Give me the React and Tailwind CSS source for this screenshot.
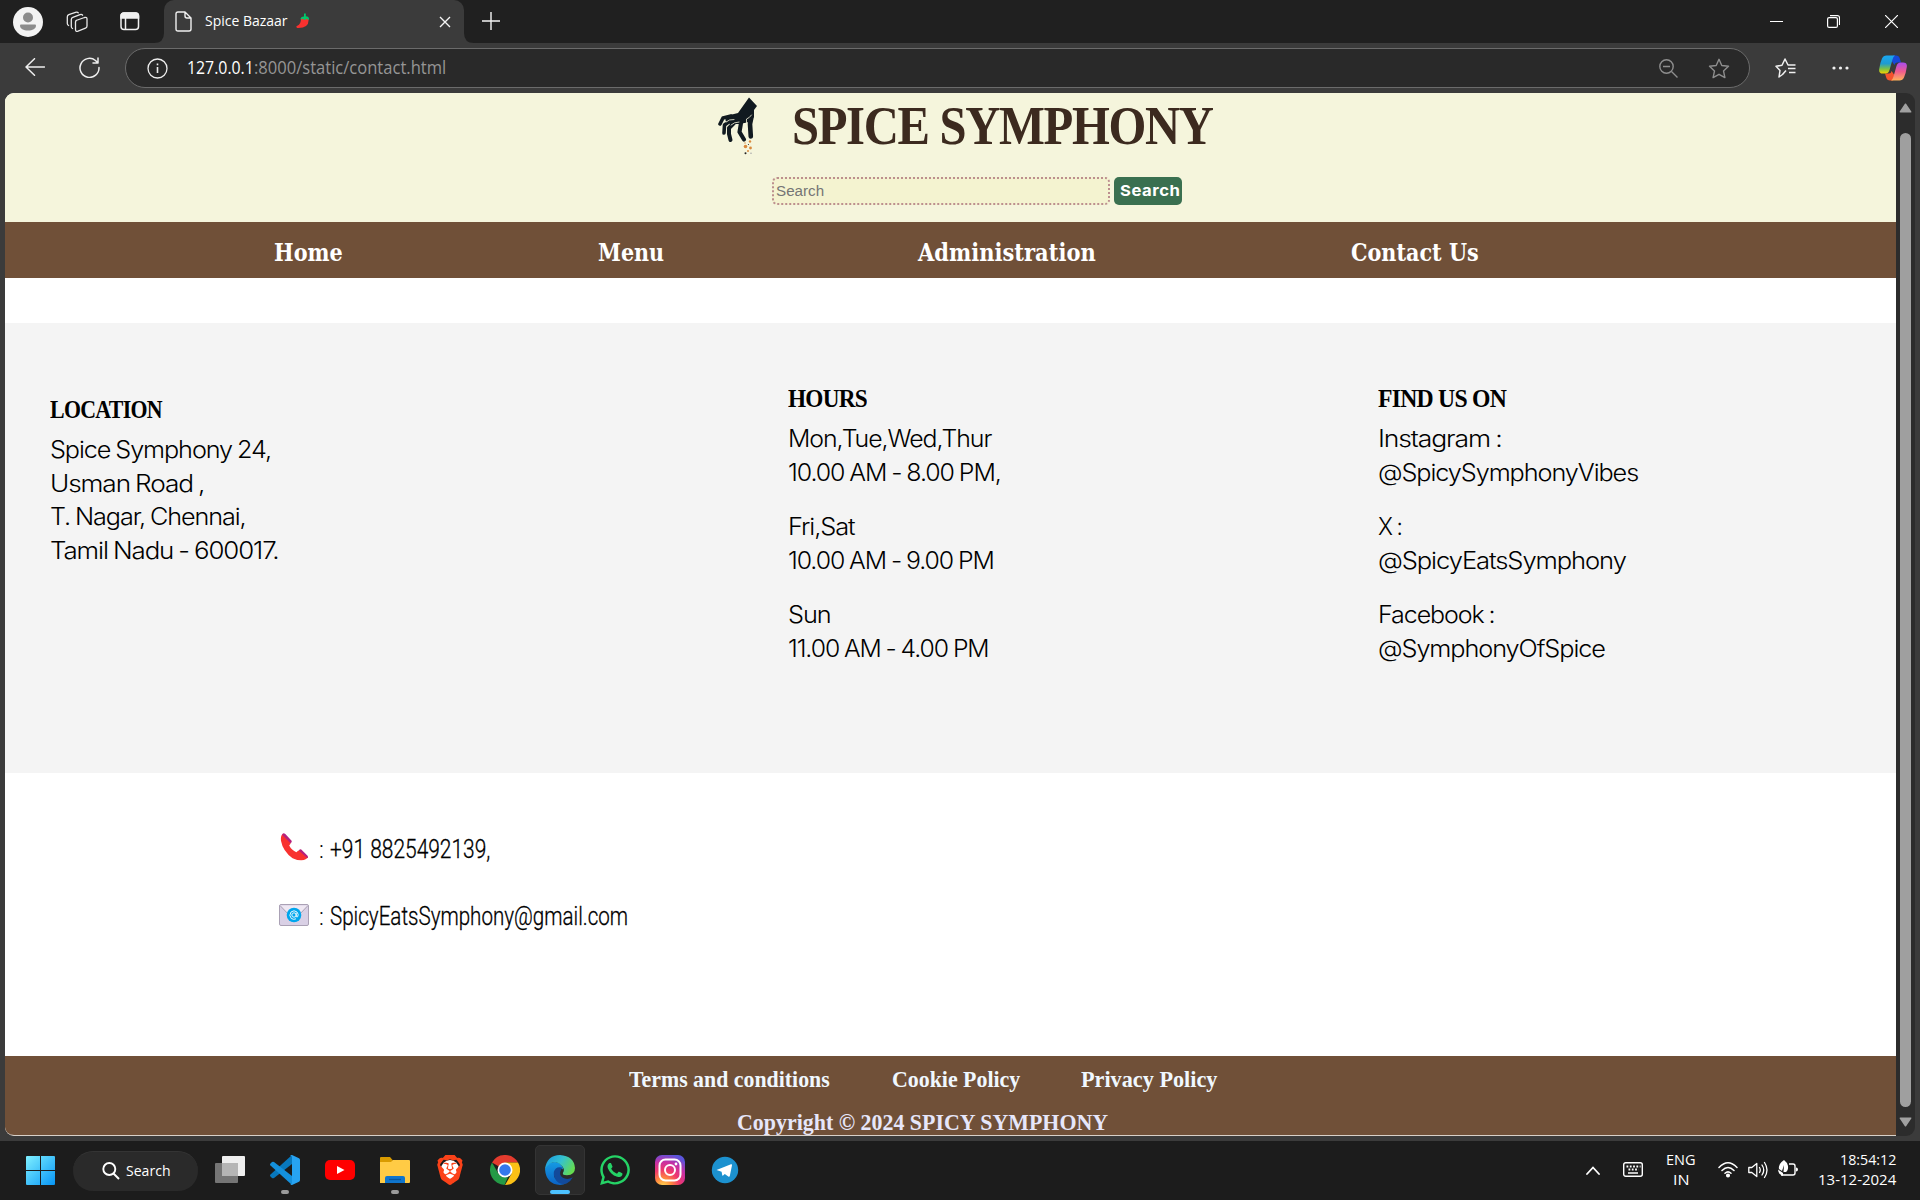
import React, { useLayoutEffect, useRef } from "react";
import { FaWhatsapp } from "react-icons/fa";
import { SiBrave } from "react-icons/si";

// Text set to an exact advance width by condensing or widening the glyphs.
function Fit({ w, className = "", children }) {
  const box = useRef(null);
  const text = useRef(null);
  useLayoutEffect(() => {
    text.current.style.transform = `scaleX(${w / text.current.offsetWidth})`;
    box.current.style.width = `${w}px`;
  }, [w]);
  return (
    <span ref={box} className="block shrink-0">
      <span ref={text} className={`inline-block origin-left whitespace-pre ${className}`}>
        {children}
      </span>
    </span>
  );
}

const UI = "font-['Open_Sans',sans-serif]";

function TabStrip() {
  return (
    <div className="flex h-[43px] items-center bg-[#202020] text-white">
      <svg className="ml-[13px] shrink-0" width="30" height="30" viewBox="0 0 30 30">
        <circle cx="15" cy="15" r="15" fill="#f3f3f3" />
        <circle cx="15" cy="10.5" r="5" fill="#8b8b8b" />
        <path d="M8 17.5h14a1 1 0 0 1 1 1c0 3.200-3.500 5-8 5s-8-1.800-8-5a1 1 0 0 1 1-1Z" fill="#8b8b8b" />
      </svg>
      <svg className="ml-[23px] shrink-0" width="22" height="22" viewBox="0 0 22 22" fill="none" stroke="#e8e8e8" strokeWidth="1.300" strokeLinejoin="round" strokeLinecap="round">
        <path d="M10 9.500 18.500 6.500Q21 5.800 21 8v7q0 1.600-1.500 2.200L12 20.200Q9.500 21 9.500 18.500v-7.500Q9.500 9.800 10.500 9.300Z" />
        <path d="M6.500 17.500Q5.300 17 5.300 15.500V8.500Q5.300 6.900 6.800 6.300L14 3.600Q15.800 3 16.600 4.200" />
        <path d="M2.600 14.500Q1.300 14 1.300 12.500V6Q1.300 4.300 2.800 3.700L9.500 1.300Q11.500.700 12.300 1.800" />
      </svg>
      <svg className="ml-[32px] shrink-0" width="20" height="19" viewBox="0 0 20 19" fill="none" stroke="#f0f0f0" strokeWidth="1.500">
        <rect x="1" y="1" width="17.500" height="16.500" rx="3" />
        <path d="M1 4a3 3 0 0 1 3-3h11.500a3 3 0 0 1 3 3v2H1Z" fill="#f0f0f0" />
        <path d="M5.500 6v11.500" />
      </svg>
      <div className="-mr-[10px] ml-[14px] flex h-[43px] items-end">
        <svg width="10" height="10" viewBox="0 0 10 10"><path d="M10 0v10H0Q10 10 10 0Z" fill="#3b3b3b" /></svg>
        <div className="flex h-[43px] w-[300px] items-center rounded-t-[10px] bg-[#3b3b3b]">
          <svg className="ml-[11px] shrink-0" width="17" height="21" viewBox="0 0 17 21" fill="none" stroke="#f0f0f0" strokeWidth="1.400" strokeLinejoin="round">
            <path d="M3 1h7l6 6v11q0 2-2 2H3q-2 0-2-2V3q0-2 2-2ZM10 1v4q0 2 2 2h4" />
          </svg>
          <div className={`mb-[3px] ml-[13px] text-[15px] leading-5 ${UI}`}><Fit w={83}>Spice Bazaar</Fit></div>
          <svg className="mb-[2px] ml-[8px] shrink-0" width="14" height="16" viewBox="0 0 14 16">
            <path d="M5 5.500Q10 3 12.500 6Q13.500 15.500 1.200 15Q-.700 13.500 1.300 12.800Q5 11.500 5 5.500Z" fill="#f8312f" />
            <path d="M8 3.500V.800Q9.500-.200 9.800 1v2.300Q13.500 3.500 13 7L10.500 5.800 8.500 7 6.800 5.700 4.500 6.500Q4.500 3.500 8 3.500Z" fill="#00c86c" />
          </svg>
          <svg className="ml-[129px] shrink-0" width="12" height="12" viewBox="0 0 12 12" stroke="#f5f5f5" strokeWidth="1.400"><path d="m1 1 10 10M11 1 1 11" /></svg>
        </div>
        <svg width="10" height="10" viewBox="0 0 10 10"><path d="M0 0v10h10Q0 10 0 0Z" fill="#3b3b3b" /></svg>
      </div>
      <svg className="mb-px ml-[18px] shrink-0" width="18" height="18" viewBox="0 0 18 18" stroke="#f5f5f5" strokeWidth="1.400"><path d="M9 0v18M0 9h18" /></svg>
      <svg className="ml-auto shrink-0" width="13" height="13" viewBox="0 0 13 13" stroke="#fff"><path d="M0 6.500h13" /></svg>
      <svg className="ml-[44px] shrink-0" width="13" height="13" viewBox="0 0 13 13" fill="none" stroke="#fff" strokeWidth="1.200">
        <rect x=".600" y="2.600" width="9.800" height="9.800" rx="1.500" /><path d="M3 .600h7.500q2 0 2 2V10" />
      </svg>
      <svg className="ml-[45px] mr-[22px] shrink-0" width="13" height="13" viewBox="0 0 13 13" stroke="#fff" strokeWidth="1.200"><path d="m0 0 13 13M13 0 0 13" /></svg>
    </div>
  );
}

function Toolbar() {
  return (
    <div className="flex h-[50px] items-center bg-[#3b3b3b]">
      <svg className="mb-[2px] ml-[25px] shrink-0" width="20" height="18" viewBox="0 0 20 18" fill="none" stroke="#eee" strokeWidth="1.500" strokeLinecap="round" strokeLinejoin="round"><path d="M19.500 9H1M9.500.700 1 9l8.500 8.300" /></svg>
      <svg className="mb-px ml-[34px] shrink-0" width="21" height="21" viewBox="0 0 21 21" fill="none" stroke="#eee" strokeWidth="1.500" strokeLinecap="round" strokeLinejoin="round"><path d="M20 10.500A9.500 9.500 0 1 1 16.500 3.500L19 6M19 1v5h-5" /></svg>
      <div className="ml-[25px] flex h-10 w-[1625px] shrink-0 items-center rounded-full border border-[#6b6b6b] bg-[#292929]">
        <svg className="ml-[21px] shrink-0" width="21" height="21" viewBox="0 0 21 21" fill="none" stroke="#eee" strokeWidth="1.300"><circle cx="10.500" cy="10.500" r="9.500" /><path d="M10.500 9v6M10.500 5.500v1.800" strokeWidth="1.600" /></svg>
        <div className={`mb-[2px] ml-[19px] flex text-[17.500px] leading-6 ${UI}`}>
          <Fit w={67} className="text-white">127.0.0.1</Fit>
          <Fit w={192} className="text-[#959595]">:8000/static/contact.html</Fit>
        </div>
        <svg className="ml-auto shrink-0" width="19" height="19" viewBox="0 0 19 19" fill="none" stroke="#8e8e8e" strokeWidth="1.400"><circle cx="7.500" cy="7.500" r="6.700" /><path d="m12.500 12.500 6 6M4 7.500h7" /></svg>
        <svg className="ml-[30px] mr-[19px] shrink-0" width="22" height="21" viewBox="0 0 22 21" fill="none" stroke="#8e8e8e" strokeWidth="1.400" strokeLinejoin="round"><path d="m11 1.300 2.800 6.200 6.700.800-5 4.600 1.400 6.700L11 16.300l-5.900 3.300 1.400-6.700-5-4.600 6.700-.800Z" /></svg>
      </div>
      <svg className="ml-[25px] shrink-0" width="21" height="20" viewBox="0 0 21 20" fill="none" stroke="#f0f0f0" strokeWidth="1.500" strokeLinejoin="round"><path d="M11 12.500 7.500 16.500 4 19l1-6.500L1 8.300l6-1L10 1l3 6h7.500M13 10.500h7.500M14 14.500h6.500" /></svg>
      <svg className="mb-px ml-[36px] shrink-0" width="17" height="4" viewBox="0 0 17 4" fill="#f0f0f0"><circle cx="2" cy="2" r="1.600" /><circle cx="8.500" cy="2" r="1.600" /><circle cx="15" cy="2" r="1.600" /></svg>
      <svg className="ml-[30px] shrink-0" width="28" height="26" viewBox="0 0 28 26">
        <defs>
          <linearGradient id="cpA" x1="0" y1="0" x2="0" y2="1"><stop offset="0" stopColor="#19a7f2" /><stop offset=".450" stopColor="#1f9bd0" /><stop offset=".750" stopColor="#7fc241" /><stop offset="1" stopColor="#f5d000" /></linearGradient>
          <linearGradient id="cpB" x1="0" y1="0" x2="0" y2="1"><stop offset="0" stopColor="#a94cf0" /><stop offset=".500" stopColor="#ef5b8f" /><stop offset="1" stopColor="#ffb25a" /></linearGradient>
        </defs>
        <path d="M14 .500h3q3 0 3.800 3L22 7.500h-4q-2 0-2.600 2.500L12 5Z" fill="#1648d8" />
        <path d="M14 25.500h-3q-3 0-3.800-3L6 18.500h4q2 0 2.600-2.500L16 21Z" fill="#f4532d" />
        <path d="M7.500.500H16q-1.800 1-2.500 4L10.500 15Q9.500 18.500 6.500 18.500H4q-4.500 0-3.800-4.500Q1 8 3 3.500 4.300.500 7.500.500Z" fill="url(#cpA)" />
        <path d="M20.500 25.500H12q1.800-1 2.500-4L17.500 11q1-3.500 4-3.500H24q4.500 0 3.800 4.500Q27 18 25 22.500q-1.300 3-4.500 3Z" fill="url(#cpB)" />
      </svg>
    </div>
  );
}

function HandLogo() {
  return (
    <svg className="mt-px shrink-0" width="40" height="58" viewBox="0 0 40 58">
      <path d="M31 .500 39 9l-3 4 0 7-5 5-9 2-10 0-5-4 5-5 8-2Z" fill="#111a20" />
      <g fill="none" stroke="#111a20" strokeLinecap="round" strokeLinejoin="round">
        <path d="M13 19 5 21 2 27" strokeWidth="3.600" />
        <path d="M12 24 6.500 28 6 36" strokeWidth="3.600" />
        <path d="M16 26 11 31v6l1.500 6" strokeWidth="4" />
        <path d="M23 26 21.500 35 26 42.500" strokeWidth="4.200" />
        <path d="M33.500 20 32 27l.800 12.500" strokeWidth="4.600" />
      </g>
      <path d="M8 25q3-3 8-2.500M13 28q3-3 8-3M28.500 33V22q3-1 5-4" fill="none" stroke="#f5f5dc" strokeWidth=".800" strokeLinecap="round" />
      <g fill="#d98a3d"><circle cx="27.500" cy="49.500" r="1.800" /><circle cx="32" cy="44.500" r="1.200" /><circle cx="32.500" cy="51" r="1.400" /><circle cx="27" cy="46" r=".700" /><circle cx="30" cy="54" r="1" /></g>
      <circle cx="27.500" cy="56.300" r="1" fill="#222" /><circle cx="33" cy="56.200" r=".800" fill="#aaa" /><circle cx="30.500" cy="47.500" r=".600" fill="#333" />
    </svg>
  );
}

function Header() {
  return (
    <header className="h-[129px] bg-[#f5f5dc] pt-[3px]">
      <div className="ml-[713px] flex h-[60px] items-start">
        <HandLogo />
        <div className="ml-[34px] font-['Liberation_Serif',serif] text-[54px] font-bold leading-[60px] tracking-[-1.500px] text-[#3c2a1f]"><Fit w={421}>SPICE SYMPHONY</Fit></div>
      </div>
      <div className="ml-[767px] mt-[21px] flex gap-[4px]">
        <div className="h-7 w-[338px] rounded-[5px] border-2 border-dotted border-[#bc8f8f] bg-[#f4f3d0] pl-[2px] font-['Liberation_Sans',sans-serif] text-[15.500px] leading-[23px] text-[#757575]"><Fit w={48}>Search</Fit></div>
        <button className="flex h-7 w-[68px] rounded-[5px] bg-[#3a7050] pl-[3px] font-['Inter',sans-serif] text-[15px] font-bold leading-[27px] text-white"><Fit w={61} className="tracking-[0.5px]">Search</Fit></button>
      </div>
    </header>
  );
}

const NAV = [
  { label: "Home", w: 69, gap: "ml-[269px]" },
  { label: "Menu", w: 66, gap: "ml-[255px]" },
  { label: "Administration", w: 178, gap: "ml-[254px]" },
  { label: "Contact Us", w: 128, gap: "ml-[255px]" },
];

function Nav() {
  return (
    <nav className="flex h-14 items-start bg-[#705038] pt-[3px] font-['DejaVu_Serif',serif] text-[23.500px] font-bold leading-[56px] text-white">
      {NAV.map((n) => (
        <div key={n.label} className={n.gap}><Fit w={n.w}>{n.label}</Fit></div>
      ))}
    </nav>
  );
}

const COLUMNS = [
  {
    title: "LOCATION", w: 112, place: "ml-[45px] mt-[70px] w-[738px]",
    groups: [[["Spice Symphony 24,", 221], ["Usman Road ,", 154], ["T. Nagar, Chennai,", 196], ["Tamil Nadu - 600017.", 229]]],
  },
  {
    title: "HOURS", w: 79, place: "mt-[59px] w-[590px]",
    groups: [
      [["Mon,Tue,Wed,Thur", 203], ["10.00 AM - 8.00 PM,", 213]],
      [["Fri,Sat", 67], ["10.00 AM - 9.00 PM", 206]],
      [["Sun", 43], ["11.00 AM - 4.00 PM", 201]],
    ],
  },
  {
    title: "FIND US ON", w: 128, place: "mt-[59px]",
    groups: [
      [["Instagram :", 123], ["@SpicySymphonyVibes", 260]],
      [["X :", 24], ["@SpicyEatsSymphony", 248]],
      [["Facebook :", 117], ["@SymphonyOfSpice", 227]],
    ],
  },
];

function Info() {
  return (
    <section className="mt-[45px] flex h-[450px] items-start bg-[#f4f4f4] text-black">
      {COLUMNS.map((c) => (
        <div key={c.title} className={`shrink-0 ${c.place}`}>
          <h2 className="font-['Liberation_Serif',serif] text-[25px] font-bold leading-[33px] tracking-[-0.8px]"><Fit w={c.w}>{c.title}</Fit></h2>
          <div className="mt-[7px] flex flex-col gap-[21px] font-['Inter',sans-serif] text-[23.500px] font-light leading-[33.600px] tracking-[-1px] [word-spacing:-1px]">
            {c.groups.map((g, i) => (
              <div key={i}>
                {g.map(([t, w]) => <div key={t} className="h-[33.600px]"><Fit w={w}>{t}</Fit></div>)}
              </div>
            ))}
          </div>
        </div>
      ))}
    </section>
  );
}

function Contact() {
  return (
    <section className="ml-[274px] flex h-[283px] flex-col gap-[37px] pt-[62px] font-['Roboto',sans-serif] text-[25px] font-light leading-[30px] text-black">
      <div className="flex h-[30px]">
        <svg className="mt-[-2px] ml-px shrink-0" width="29" height="29" viewBox="0 0 30 30">
          <path d="M2.500 1Q.500 3 1 8q2 11 12 18 9 4 14 1l2-2-8-7q-2-.500-4 2-5-2-7.500-7 2-2 1.500-4Z" fill="#f8312f" />
          <path d="M3 .600q1-.600 2.500.400l6.500 7q.800 1.200-1 2.500L2.500 2Q2 1.200 3 .600ZM19.500 18q1-1.500 2.500-1l6.500 6.500q1 1.300 0 2.500Z" fill="#b4207e" />
        </svg>
        <span className="ml-[10px] w-[11px] text-[23px] leading-[31px]">:</span>
        <Fit w={160} className="[-webkit-text-stroke:0.3px_#000]">+91 8825492139,</Fit>
      </div>
      <div className="flex h-[30px]">
        <svg className="mt-[2px] shrink-0" width="30" height="22" viewBox="0 0 30 22">
          <rect x=".500" y=".500" width="29" height="21" rx="1.500" fill="#d9d0e5" stroke="#aaa1b5" />
          <path d="M1 1.500 12 13q3 2 6 0L29 1.500" fill="#efe8f3" stroke="#a9a0b3" />
          <circle cx="15" cy="11" r="7.300" fill="#00a6ed" />
          <path d="M17.200 8.800v3.400q.300 1.400 1.500.500Q20 10.500 18 8q-3-2.500-6 0-2.500 3.500.300 6.500 2.500 1.500 4.700.300M17.200 11a2.200 2.200 0 1 1-4.400 0 2.200 2.200 0 0 1 4.400 0Z" fill="none" stroke="#fff" strokeWidth=".900" />
        </svg>
        <span className="ml-[10px] w-[11px] text-[23px] leading-[31px]">:</span>
        <Fit w={298} className="[-webkit-text-stroke:0.3px_#000]">SpicyEatsSymphony@gmail.com</Fit>
      </div>
    </section>
  );
}

function Footer() {
  return (
    <footer className="h-[79px] overflow-hidden bg-[#705038] pt-[10px] font-['Liberation_Serif',serif] text-[22.400px] font-bold leading-7">
      <div className="ml-[624px] flex h-7 text-[#f0f8ff]">
        <Fit w={201}>Terms and conditions</Fit>
        <div className="ml-[62px]"><Fit w={128}>Cookie Policy</Fit></div>
        <div className="ml-[61px]"><Fit w={136}>Privacy Policy</Fit></div>
      </div>
      <div className="ml-[732px] mt-[15px] text-[#e6e6fa]"><Fit w={371}>Copyright © 2024 SPICY SYMPHONY</Fit></div>
    </footer>
  );
}

function Scrollbar() {
  return (
    <div className="flex h-[1043px] w-[19px] flex-col items-center rounded-r-[9px] bg-[#2c2c2c]">
      <svg className="mt-[10px] shrink-0" width="13" height="10" viewBox="0 0 13 10"><path d="M6.500 1.200 11.700 8.800H1.300Z" fill="#a0a0a0" stroke="#a0a0a0" strokeWidth="1.500" strokeLinejoin="round" /></svg>
      <div className="mt-[20px] h-[974px] w-[11px] rounded-full bg-[#9f9f9f]" />
      <svg className="mt-[10px] shrink-0" width="13" height="10" viewBox="0 0 13 10"><path d="M6.500 8.800 11.700 1.200H1.300Z" fill="#a0a0a0" stroke="#a0a0a0" strokeWidth="1.500" strokeLinejoin="round" /></svg>
    </div>
  );
}

function Icon({ children }) {
  return <svg width="30" height="30" viewBox="0 0 30 30">{children}</svg>;
}

const APPS = [
  { name: "tasks", icon: <Icon><rect x="7" y="1" width="23" height="20" rx="1" fill="#eeeeee" /><rect y="8" width="23" height="20" rx="1" fill="#757575" /><path d="M7 8h16v13H7Z" fill="#b5b5b5" /></Icon> },
  { name: "code", run: true, icon: <Icon><path d="M22 0v9L4 23q-1 .700-2 0L.500 21.500q-1-1 0-2Z" fill="#0878bd" /><path d="M22 30v-9L4 7q-1-.700-2 0L.500 8.500q-1 1 0 2Z" fill="#1490dc" /><path d="M22 0 29 3.200q1 .500 1 1.800v20q0 1.300-1 1.800L22 30q-1 0-2-1 2 .500 2-1V2q0-1.500-2-1 1-1 2-1Z" fill="#27a3f2" /></Icon> },
  { name: "video", icon: <Icon><rect y="5" width="30" height="20" rx="5" fill="#ff0000" /><path d="m12 11 7.500 4L12 19Z" fill="#fff" /></Icon> },
  { name: "files", run: true, icon: <Icon><path d="M0 3q0-1 1-1h9l3 3.500V9H0Z" fill="#d99b00" /><path d="M0 7h11l2-2h16q1 0 1 1v21q0 1-1 1H0Z" fill="#ffcb45" /><path d="M5 28v-5q0-2 2-2h16q2 0 2 2v5Z" fill="#0f75cd" /><path d="M9 24.500h12" stroke="#07569e" strokeWidth="1.300" /></Icon> },
  { name: "brave", icon: <span className="grid h-[30px] w-[30px] place-items-center"><span className="col-start-1 row-start-1 h-[21px] w-[18px] rounded-full bg-white" /><SiBrave className="col-start-1 row-start-1 text-[#fb4219]" size={30} /></span> },
  { name: "chrome", icon: <Icon><path d="M15 15 2 7.500A15 15 0 0 1 28 7.500H15Z" fill="#e33b2e" /><path d="M15 7.500h13A15 15 0 0 1 15 30l6.500-11.200Z" fill="#fbc116" /><path d="M2 7.500 8.500 18.800Q12 23.500 18 22L14.500 30A15 15 0 0 1 2 7.500Z" fill="#249a46" /><circle cx="15" cy="15" r="7.500" fill="#fff" /><circle cx="15" cy="15" r="5.800" fill="#3478ed" /></Icon> },
  {
    name: "edge", active: true, icon: <Icon>
      <defs><linearGradient id="edA" x1="0" x2="1" y1=".2" y2=".6"><stop stopColor="#1b9de2" /><stop offset=".5" stopColor="#35c1cf" /><stop offset="1" stopColor="#66dc4e" /></linearGradient><linearGradient id="edB" x1="0" x2="0" y1="0" y2="1"><stop stopColor="#159be4" /><stop offset="1" stopColor="#0b62c4" /></linearGradient></defs>
      <path d="M0 14Q2 7 10 7q7.500 1 8 7.500Q13 11 10 16t2 9q4 4 10 3Q18 30 15 30 1 29 0 14Z" fill="url(#edB)" />
      <path d="M17 12.500Q10.500 11 8.800 17 8 24 14 28q4 2 8 .300 4-2.300 5.800-6Q22 25.500 17.500 22.500 13.500 19.500 16 15Z" fill="#124a9b" />
      <path d="M0 14Q2 0 15 0 29 1 30 13q0 7-8 7.300-5 0-4-2.500 2-3-.500-6.300Q12 5 5 8.500 1.500 11 0 14Z" fill="url(#edA)" />
    </Icon>,
  },
  { name: "chat", icon: <FaWhatsapp size={34} className="shrink-0 text-[#25d366]" /> },
  {
    name: "photos", icon: <Icon>
      <defs><radialGradient id="igA" cx=".27" cy="1.050" r="1.100"><stop stopColor="#ffdc55" /><stop offset=".25" stopColor="#ff8b3e" /><stop offset=".5" stopColor="#f0396b" /><stop offset=".75" stopColor="#c830a4" /><stop offset="1" stopColor="#5b55dc" /></radialGradient></defs>
      <rect width="30" height="30" rx="7" fill="url(#igA)" /><g fill="none" stroke="#fff" strokeWidth="2"><rect x="4.500" y="4.500" width="21" height="21" rx="6" /><circle cx="15" cy="15" r="5" /></g><circle cx="21" cy="9" r="1.400" fill="#fff" />
    </Icon>,
  },
  { name: "telegram", icon: <Icon><circle cx="15" cy="15" r="13.200" fill="#1c91cf" /><path d="M6.500 15 21 9.300q1.200-.300 1 1L19.800 21q-.400 1.200-1.500.500l-3.500-2.600-1.700 1.700q-.800.500-.900-.600l-.600-3.300Z" fill="#fff" /></Icon> },
];

function Taskbar() {
  return (
    <div className={`flex h-[59px] items-center bg-[#1c1c1c] text-white ${UI}`}>
      <svg className="ml-[26px] shrink-0" width="29" height="29" viewBox="0 0 29 29">
        <defs><linearGradient id="win" x1="0" y1="0" x2="1" y2="1"><stop stopColor="#7ff0ff" /><stop offset="1" stopColor="#0795f5" /></linearGradient></defs>
        <path d="M1 0h13v14H0V1Q0 0 1 0ZM15 0h13q1 0 1 1v13H15ZM0 15h14v14H1q-1 0-1-1ZM15 15h14v13q0 1-1 1H15Z" fill="url(#win)" />
      </svg>
      <div className="ml-[18px] flex h-10 w-[125px] shrink-0 items-center rounded-full border-t border-[#343434] bg-[#2a2a2a]">
        <svg className="mb-px ml-[29px] shrink-0" width="18" height="18" viewBox="0 0 18 18" fill="none" stroke="#fff" strokeWidth="1.900"><circle cx="7.300" cy="7" r="6" /><path d="m11.500 11.500 5.500 5.500" /></svg>
        <div className="mb-[3px] ml-[6px] text-[15px] leading-5"><Fit w={45}>Search</Fit></div>
      </div>
      <div className="mb-px ml-[4.500px] flex h-[58px] items-center">
        {APPS.map((a) => (
          <div key={a.name} className="flex h-[58px] w-[55px] items-center justify-center">
            <div className={a.active ? "flex h-[50px] w-[50px] flex-col items-center rounded-[5px] border border-[#343434] bg-[#2a2a2a] pt-[9px]" : "flex h-[50px] w-[50px] flex-col items-center pt-[10px]"}>
              <div className="flex h-[30px] w-[30px] shrink-0 items-center justify-center">{a.icon}</div>
              {a.active && <div className="mt-[5px] h-1 w-5 shrink-0 rounded-full bg-[#4cc2ff]" />}
              {a.run && <div className="mt-[5px] h-1 w-2 shrink-0 rounded-full bg-[#9a9a9a]" />}
            </div>
          </div>
        ))}
      </div>
      <svg className="ml-auto shrink-0" width="14" height="9" viewBox="0 0 14 9" fill="none" stroke="#fff" strokeWidth="1.800" strokeLinecap="round"><path d="m1 8 6-6.500L13 8" /></svg>
      <svg className="mb-[2px] ml-[23px] shrink-0" width="20" height="15" viewBox="0 0 20 15" fill="none" stroke="#fff" strokeWidth="1.400"><rect x=".700" y=".700" width="18.600" height="13.600" rx="2" /><path d="M3.500 4.500h14" strokeDasharray="1.800 1.500" strokeWidth="1.800" /><path d="M5.500 7.500h10" strokeDasharray="1.800 1.500" strokeWidth="1.800" /><path d="M5 11h10" strokeWidth="1.500" /></svg>
      <div className="mb-[3px] ml-[23px] flex flex-col items-center text-[15px] leading-5"><Fit w={30}>ENG</Fit><Fit w={16}>IN</Fit></div>
      <svg className="mb-[2px] ml-[22px] shrink-0" width="20" height="17" viewBox="0 0 20 17" fill="none" stroke="#fff" strokeWidth="1.500" strokeLinecap="round"><path d="M1 6.500Q10-3 19 6.500M4 9.500Q10 3.500 16 9.500M7 12.300Q10 9.500 13 12.300" /><circle cx="10" cy="14.500" r="1.300" fill="#fff" /></svg>
      <svg className="mb-px ml-[10px] shrink-0" width="20" height="18" viewBox="0 0 20 18" fill="none" stroke="#fff" strokeWidth="1.300" strokeLinecap="round" strokeLinejoin="round"><path d="M.800 6.500v5h3l5 4v-13l-5 4ZM11.500 6.500q1.500 2.500 0 5M14 4q3.500 5 0 10M16.500 1.500q5 7.500 0 15" /></svg>
      <svg className="mb-[3px] ml-[10px] shrink-0" width="20" height="18" viewBox="0 0 20 18"><path d="M11 4h4q2 0 2 2v7q0 2-2 2H3" fill="none" stroke="#fff" strokeWidth="1.400" /><path d="M18 7.500q2 0 2 2t-2 2ZM6 0Q0 4 1 9l3 2L6 5l-.500 7H8q2.500-2 2-6Q9 2 6 0Z" fill="#fff" /><path d="M0 9.500 5 13v3Q0 14 0 9.500Z" fill="#fff" /></svg>
      <div className="mb-[4px] ml-[20px] mr-[24px] flex flex-col items-end text-[15px] leading-5"><Fit w={56}>18:54:12</Fit><Fit w={78}>13-12-2024</Fit></div>
    </div>
  );
}

export default function App() {
  return (
    <div className="h-[1200px] w-[1920px] overflow-hidden bg-[#3b3b3b]">
      <TabStrip />
      <Toolbar />
      <div className="flex h-[1048px] pl-[5px]">
        <main className="h-[1043px] w-[1891px] overflow-hidden rounded-l-[9px] border-b border-[#d8d0c8] bg-white">
          <Header />
          <Nav />
          <Info />
          <Contact />
          <Footer />
        </main>
        <Scrollbar />
      </div>
      <Taskbar />
    </div>
  );
}
